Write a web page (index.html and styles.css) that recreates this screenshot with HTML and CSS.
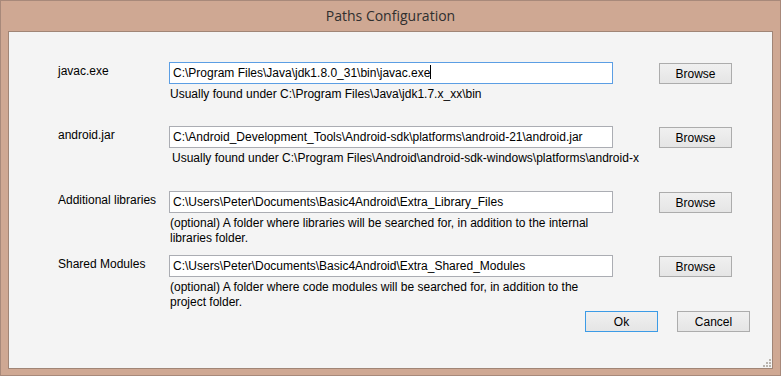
FILE: index.html
```html
<!DOCTYPE html>
<html>
<head>
<meta charset="utf-8">
<link rel="stylesheet" href="styles.css">
</head>
<body>
<div class="window">
  <div class="titlebar">Paths Configuration</div>
  <div class="client">
    <div class="group g1">
      <div class="label">javac.exe</div>
      <div class="field focused">C:\Program Files\Java\jdk1.8.0_31\bin\javac.exe<span class="caret"></span></div>
      <div class="btn browse">Browse</div>
      <div class="hint">Usually found under C:\Program Files\Java\jdk1.7.x_xx\bin</div>
    </div>
    <div class="group g2">
      <div class="label">android.jar</div>
      <div class="field">C:\Android_Development_Tools\Android-sdk\platforms\android-21\android.jar</div>
      <div class="btn browse">Browse</div>
      <div class="hint shifted">Usually found under C:\Program Files\Android\android-sdk-windows\platforms\android-x</div>
    </div>
    <div class="group g3">
      <div class="label">Additional libraries</div>
      <div class="field">C:\Users\Peter\Documents\Basic4Android\Extra_Library_Files</div>
      <div class="btn browse">Browse</div>
      <div class="hint">(optional) A folder where libraries will be searched for, in addition to the internal<br>libraries folder.</div>
    </div>
    <div class="group g4">
      <div class="label">Shared Modules</div>
      <div class="field">C:\Users\Peter\Documents\Basic4Android\Extra_Shared_Modules</div>
      <div class="btn browse">Browse</div>
      <div class="hint">(optional) A folder where code modules will be searched for, in addition to the<br>project folder.</div>
    </div>
    <div class="actions">
      <div class="btn default">Ok</div>
      <div class="btn">Cancel</div>
    </div>
    <svg class="grip" width="9" height="9" viewBox="0 0 9 9">
      <g fill="#b9b4ae">
        <rect x="7" y="1" width="2" height="2"/>
        <rect x="4" y="4" width="2" height="2"/>
        <rect x="7" y="4" width="2" height="2"/>
        <rect x="1" y="7" width="2" height="2"/>
        <rect x="4" y="7" width="2" height="2"/>
        <rect x="7" y="7" width="2" height="2"/>
      </g>
    </svg>
  </div>
</div>
</body>
</html>
```
FILE: styles.css
```css
html, body {
  margin: 0;
  padding: 0;
}
body {
  width: 781px;
  height: 376px;
  overflow: hidden;
  font-family: "Liberation Sans", Arial, sans-serif;
  font-size: 12px;
  color: #000;
}
.window {
  box-sizing: border-box;
  width: 781px;
  height: 376px;
  background: #cfa893;
  border: 1px solid #a8897a;
  display: flex;
  flex-direction: column;
  padding: 0 7px 6px 7px;
}
.titlebar {
  height: 30px;
  flex: none;
  display: flex;
  align-items: center;
  justify-content: center;
  font-family: "Open Sans", "Noto Sans", sans-serif;
  font-size: 14px;
  color: #2f2f2f;
  padding-bottom: 2px;
  box-sizing: border-box;
}
.client {
  position: relative;
  flex: 1;
  background: #f4f4f4;
  border: 1px solid #a08576;
  padding-left: 49px;
  box-sizing: border-box;
}
.group {
  display: grid;
  grid-template-columns: 111px 444px 46px 73px;
  grid-template-rows: 22px auto;
}
.g1 { margin-top: 30px; }
.g2 { margin-top: 24px; }
.g3 { margin-top: 25px; }
.g4 { margin-top: 9px; }
.label {
  grid-column: 1;
  grid-row: 1;
  padding-top: 2px;
  line-height: 14px;
  white-space: nowrap;
}
.field {
  grid-column: 2;
  grid-row: 1;
  box-sizing: border-box;
  height: 22px;
  border: 1px solid #abadb3;
  background: #fff;
  padding: 0 3px;
  line-height: 20px;
  white-space: nowrap;
  overflow: hidden;
}
.field.focused {
  border-color: #5b9ee4;
}
.caret {
  display: inline-block;
  width: 1px;
  height: 14px;
  background: #000;
  vertical-align: -2px;
}
.btn {
  box-sizing: border-box;
  width: 73px;
  height: 21px;
  border: 1px solid #acacac;
  background: linear-gradient(#f0f0f0, #e5e5e5);
  display: flex;
  align-items: center;
  justify-content: center;
  line-height: 14px;
}
.browse {
  grid-column: 4;
  grid-row: 1;
  margin-top: 1px;
}
.btn.default {
  border-color: #3c9be6;
}
.hint {
  grid-column: 2 / 5;
  grid-row: 2;
  padding-left: 1px;
  padding-top: 3px;
  line-height: 15px;
  white-space: nowrap;
}
.hint.shifted {
  padding-left: 3px;
}
.actions {
  display: flex;
  justify-content: flex-end;
  gap: 19px;
  margin-top: 1px;
  padding-right: 22px;
}
.grip {
  position: absolute;
  right: 1px;
  bottom: 1px;
}
```
